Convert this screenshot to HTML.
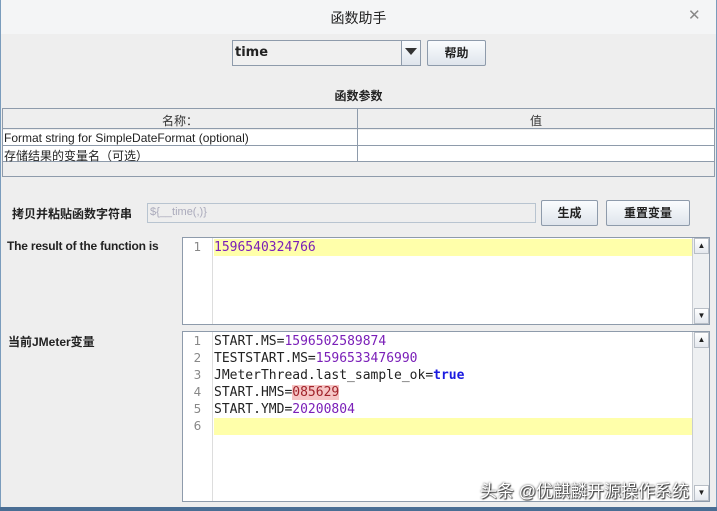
<!DOCTYPE html>
<html><head><meta charset="utf-8"><style>
*{box-sizing:border-box;margin:0;padding:0}
body{width:717px;height:511px;background:#eeeeee;font-family:"Liberation Sans","Noto Sans CJK SC",sans-serif;font-size:12px;color:#222;position:relative;overflow:hidden}
.abs{position:absolute}
.btn{position:absolute;border:1px solid #8e9bab;background:linear-gradient(#fafcfe,#dfe5ec);font-weight:bold;font-size:12px;text-align:center;border-radius:2px}
.mono{font-family:"DejaVu Sans Mono","Liberation Mono",monospace;font-size:13px}
.ed{position:absolute;background:#fff;border:1px solid #8e9bab}
.gut{position:absolute;left:0;top:0;bottom:0;width:30px;border-right:1px solid #ddd;color:#888;font-family:"DejaVu Sans",sans-serif;font-size:12px;text-align:center}
.sb{position:absolute;right:0;top:0;bottom:0;width:17px;background:#eef0f2;border-left:1px solid #c8ccd2}
.sb .u,.sb .d{position:absolute;left:1px;width:15px;height:16px;background:linear-gradient(#fff,#e4e8ee);border:1px solid #b8bec6;font-size:8px;text-align:center;line-height:14px;color:#222}
.n{color:#7a1fb8}
</style></head><body>
<div class="abs" style="left:0;top:0;width:717px;height:34px;background:#f4f5f6"></div>
<div class="abs" style="left:0;top:0;width:1px;height:511px;background:#7a9cbc"></div>
<div class="abs" style="left:716px;top:0;width:1px;height:511px;background:#7a9cbc"></div>
<div class="abs" style="left:0;top:507px;width:717px;height:4px;background:#4a6e94"></div>
<div class="abs" style="left:0;top:8px;width:717px;text-align:center;font-size:14px;color:#222">函数助手</div>
<div class="abs" style="left:688px;top:6px;font-size:15px;color:#888">✕</div>

<div class="abs" style="left:232px;top:40px;width:189px;height:26px;border:1px solid #8e9bab;background:#f0f0f0"></div>
<div class="abs" style="left:235px;top:45px;font-weight:bold;font-size:13px;font-family:'DejaVu Sans',sans-serif">time</div>
<div class="abs" style="left:401px;top:41px;width:19px;height:24px;border-left:1px solid #8e9bab;background:linear-gradient(#fafcfe,#dfe5ec)"></div>
<div class="abs" style="left:405px;top:48px;width:0;height:0;border-left:6px solid transparent;border-right:6px solid transparent;border-top:7px solid #333"></div>
<div class="btn" style="left:427px;top:40px;width:59px;height:26px;line-height:24px">帮助</div>

<div class="abs" style="left:0;top:87px;width:717px;text-align:center;font-weight:bold">函数参数</div>
<div class="abs" style="left:2px;top:108px;width:713px;height:69px;border:1px solid #8e9bab;background:#eeeeee"></div>
<div class="abs" style="left:3px;top:109px;width:711px;height:20px;border-bottom:1px solid #8e9bab"></div>
<div class="abs" style="left:3px;top:130px;width:711px;height:31px;background:#fff"></div>
<div class="abs" style="left:3px;top:145px;width:711px;height:1px;background:#8e9bab"></div>
<div class="abs" style="left:3px;top:161px;width:711px;height:1px;background:#8e9bab"></div>
<div class="abs" style="left:357px;top:109px;width:1px;height:52px;background:#8e9bab"></div>
<div class="abs" style="left:3px;top:112px;width:354px;text-align:center;color:#333">名称：</div>
<div class="abs" style="left:358px;top:112px;width:356px;text-align:center;color:#333">值</div>
<div class="abs" style="left:4px;top:131px;">Format string for SimpleDateFormat (optional)</div>
<div class="abs" style="left:4px;top:147px;">存储结果的变量名（可选）</div>

<div class="abs" style="left:12px;top:205px;font-weight:bold">拷贝并粘贴函数字符串</div>
<div class="abs" style="left:147px;top:203px;width:389px;height:20px;border:1px solid #b8c4d0;background:#eeeeee;color:#aab;font-size:11px;padding:2px 2px">${__time(,)}</div>
<div class="btn" style="left:541px;top:200px;width:57px;height:26px;line-height:24px">生成</div>
<div class="btn" style="left:606px;top:200px;width:84px;height:26px;line-height:24px">重置变量</div>

<div class="abs" style="left:7px;top:239px;font-weight:bold;font-size:12px;letter-spacing:-0.2px">The result of the function is</div>
<div class="ed" style="left:182px;top:237px;width:528px;height:88px">
 <div class="gut"><div style="margin-top:1px;line-height:17px">1</div></div>
 <div class="abs" style="left:31px;top:1px;right:17px;height:17px;background:#ffffaa"></div>
 <div class="abs mono n" style="left:31px;top:1px;line-height:17px">1596540324766</div>
 <div class="sb"><div class="u" style="top:0">▲</div><div class="d" style="bottom:0">▼</div></div>
</div>

<div class="abs" style="left:8px;top:333px;font-weight:bold">当前JMeter变量</div>
<div class="ed" style="left:182px;top:331px;width:528px;height:171px">
 <div class="gut"><div style="margin-top:1px;line-height:17px">1<br>2<br>3<br>4<br>5<br>6</div></div>
 <div class="abs" style="left:31px;top:86px;right:17px;height:17px;background:#ffffaa"></div>
 <div class="abs mono" style="left:31px;top:1px;line-height:17px;white-space:pre">START.MS=<span class="n">1596502589874</span>
TESTSTART.MS=<span class="n">1596533476990</span>
JMeterThread.last_sample_ok=<b style="color:#1a1ae0">true</b>
START.HMS=<span class="n" style="background:#f6c6c6;color:#a0222a">085629</span>
START.YMD=<span class="n">20200804</span></div>
 <div class="sb"><div class="u" style="top:0">▲</div><div class="d" style="bottom:0">▼</div></div>
</div>
<div class="abs" style="left:480px;top:477px;font-size:17px;color:#fff;text-shadow:0 0 2px #333,1px 1px 1px #333">头条 @优麒麟开源操作系统</div>
</body></html>
